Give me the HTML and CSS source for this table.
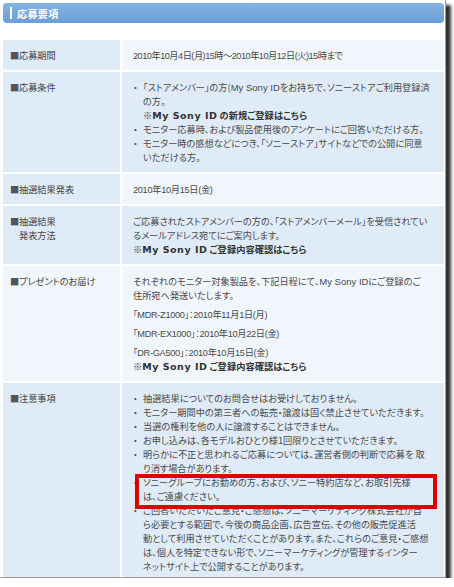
FILE: index.html
```html
<!DOCTYPE html>
<html lang="ja">
<head>
<meta charset="utf-8">
<title>応募要項</title>
<link rel="stylesheet" href="styles.css">
</head>
<body>
<div class="frame">
  <div class="head"><span class="bar"></span><span class="title">応募要項</span></div>
  <div class="table">
    <div class="lbl"><span class="sq">■</span><span>応募期間</span></div>
    <div class="val pale"><span class="num tight">2010年10月4日(月)15時～2010年10月12日(火)15時まで</span></div>

    <div class="lbl"><span class="sq">■</span><span>応募条件</span></div>
    <div class="val">
      <div class="item"><span class="dot">・</span><span>「ストアメンバー」の方(<span class="lat2">My Sony ID</span>をお持ちで、ソニーストアご利用登録済<br>の方。<br><b class="link">※<span class="lat">My Sony ID</span> の新規ご登録はこちら</b></span></div>
      <div class="item"><span class="dot">・</span><span>モニター応募時、および製品使用後のアンケートにご回答いただける方。</span></div>
      <div class="item"><span class="dot">・</span><span>モニター時の感想などにつき、「ソニーストア」サイトなどでの公開に同意<br>いただける方。</span></div>
    </div>

    <div class="lbl"><span class="sq">■</span><span>抽選結果発表</span></div>
    <div class="val pale"><span class="num">2010年10月15日(金)</span></div>

    <div class="lbl"><span class="sq">■</span><span>抽選結果<br>発表方法</span></div>
    <div class="val">
      <p class="line">ご応募されたストアメンバーの方の、「ストアメンバーメール」を受信されてい<br>るメールアドレス宛てにご案内します。</p>
      <p class="line"><b class="link">※<span class="lat">My Sony ID</span> ご登録内容確認はこちら</b></p>
    </div>

    <div class="lbl pale"><span class="sq">■</span><span>プレゼントのお届け</span></div>
    <div class="val pale">
      <p class="line">それぞれのモニター対象製品を、下記日程にて、<span class="lat2">My Sony ID</span>にご登録のご<br>住所宛へ発送いたします。</p>
      <p class="line date"><span class="num">「MDR-Z1000」：2010年11月1日(月)</span></p>
      <p class="line date"><span class="num">「MDR-EX1000」：2010年10月22日(金)</span></p>
      <p class="line date"><span class="num">「DR-GA500」：2010年10月15日(金)</span></p>
      <p class="line note"><b class="link">※<span class="lat">My Sony ID</span> ご登録内容確認はこちら</b></p>
    </div>

    <div class="lbl"><span class="sq">■</span><span>注意事項</span></div>
    <div class="val">
      <div class="item"><span class="dot">・</span><span>抽選結果についてのお問合せはお受けしておりません。</span></div>
      <div class="item"><span class="dot">・</span><span>モニター期間中の第三者への転売・譲渡は固く禁止させていただきます。</span></div>
      <div class="item"><span class="dot">・</span><span>当選の権利を他の人に譲渡することはできません。</span></div>
      <div class="item"><span class="dot">・</span><span>お申し込みは、各モデルおひとり様1回限りとさせていただきます。</span></div>
      <div class="item"><span class="dot">・</span><span>明らかに不正と思われるご応募については、運営者側の判断で応募を 取<br>り消す場合があります。</span></div>
      <div class="item marked"><span class="dot">・</span><span>ソニーグループにお勤めの方、および、ソニー特約店など、お取引先様<br>は、ご遠慮ください。</span></div>
      <div class="item"><span class="dot">・</span><span>ご回答いただいたご意見・ご感想は、ソニーマーケティング株式会社が自<br>ら必要とする範囲で、今後の商品企画、広告宣伝、その他の販売促進活<br>動として利用させていただくことがあります。また、これらのご意見・ご感想<br>は、個人を特定できない形で、ソニーマーケティングが管理するインター<br>ネットサイト上で公開することがあります。</span></div>
    </div>
  </div>
</div>
</body>
</html>
```

FILE: styles.css
```css
html, body {
  margin: 0;
  padding: 0;
  background: #ffffff;
}

body {
  font-family: "Noto Sans CJK JP", sans-serif;
  font-size: 9.2px;
  color: #4a4a4a;
  font-feature-settings: "palt";
}

.frame {
  width: 446px;
  height: 578px;
  overflow: hidden;
  background: #ffffff;
  border-right: 1px solid #9a9a9a;
  border-bottom: 1px solid #9a9a9a;
  box-shadow: 5px 5px 3px #333333;
  padding-top: 3px;
  box-sizing: border-box;
}

.head {
  margin: 0 0 0 3px;
  width: 441px;
  height: 20px;
  border-radius: 4px;
  background: linear-gradient(#84b3e2, #6b9fd6);
  display: flex;
  align-items: center;
  color: #ffffff;
  font-weight: bold;
  font-size: 10px;
}

.bar {
  width: 2px;
  height: 12px;
  background: #ffffff;
  margin: 0 5px 0 7px;
}

.title {
  letter-spacing: 0.4px;
}

.table {
  margin: 17px 0 0 3px;
  display: grid;
  grid-template-columns: 117px 322px;
  gap: 2px;
  line-height: 14px;
}

.lbl {
  background: #dfebf7;
  display: flex;
  padding: 8px 0 8px 7px;
  color: #444;
}

.sq {
  width: 9px;
  flex: none;
  color: #555;
}

.val {
  background: #dfebf7;
  padding: 8px 6px 8px 11px;
  white-space: nowrap;
}

.pale {
  background: #f1f6fc;
}

.item {
  display: flex;
}

.dot {
  width: 10px;
  flex: none;
}

.line {
  margin: 0;
}

.date {
  margin-top: 5px;
}

.note {
  margin-top: 0;
}

.link {
  color: #333;
  font-weight: bold;
  font-size: 9.2px;
  letter-spacing: 0.1px;
  line-height: 1;
}

.lat {
  font-family: "DejaVu Sans", sans-serif;
  font-size: 9.5px;
  letter-spacing: 0.5px;
  line-height: 1;
}

.lat2 {
  font-family: "Liberation Sans", sans-serif;
  font-size: 9.5px;
  line-height: 1;
}

.num {
  font-family: "Liberation Sans", "Noto Sans CJK JP", sans-serif;
  letter-spacing: -0.3px;
  line-height: 1;
}

.tight {
  letter-spacing: -0.5px;
}

.marked {
  position: relative;
}

.marked::after {
  content: "";
  position: absolute;
  left: 2px;
  right: 1px;
  top: -1px;
  bottom: -6px;
  border: 4px solid #e00000;
}
```
